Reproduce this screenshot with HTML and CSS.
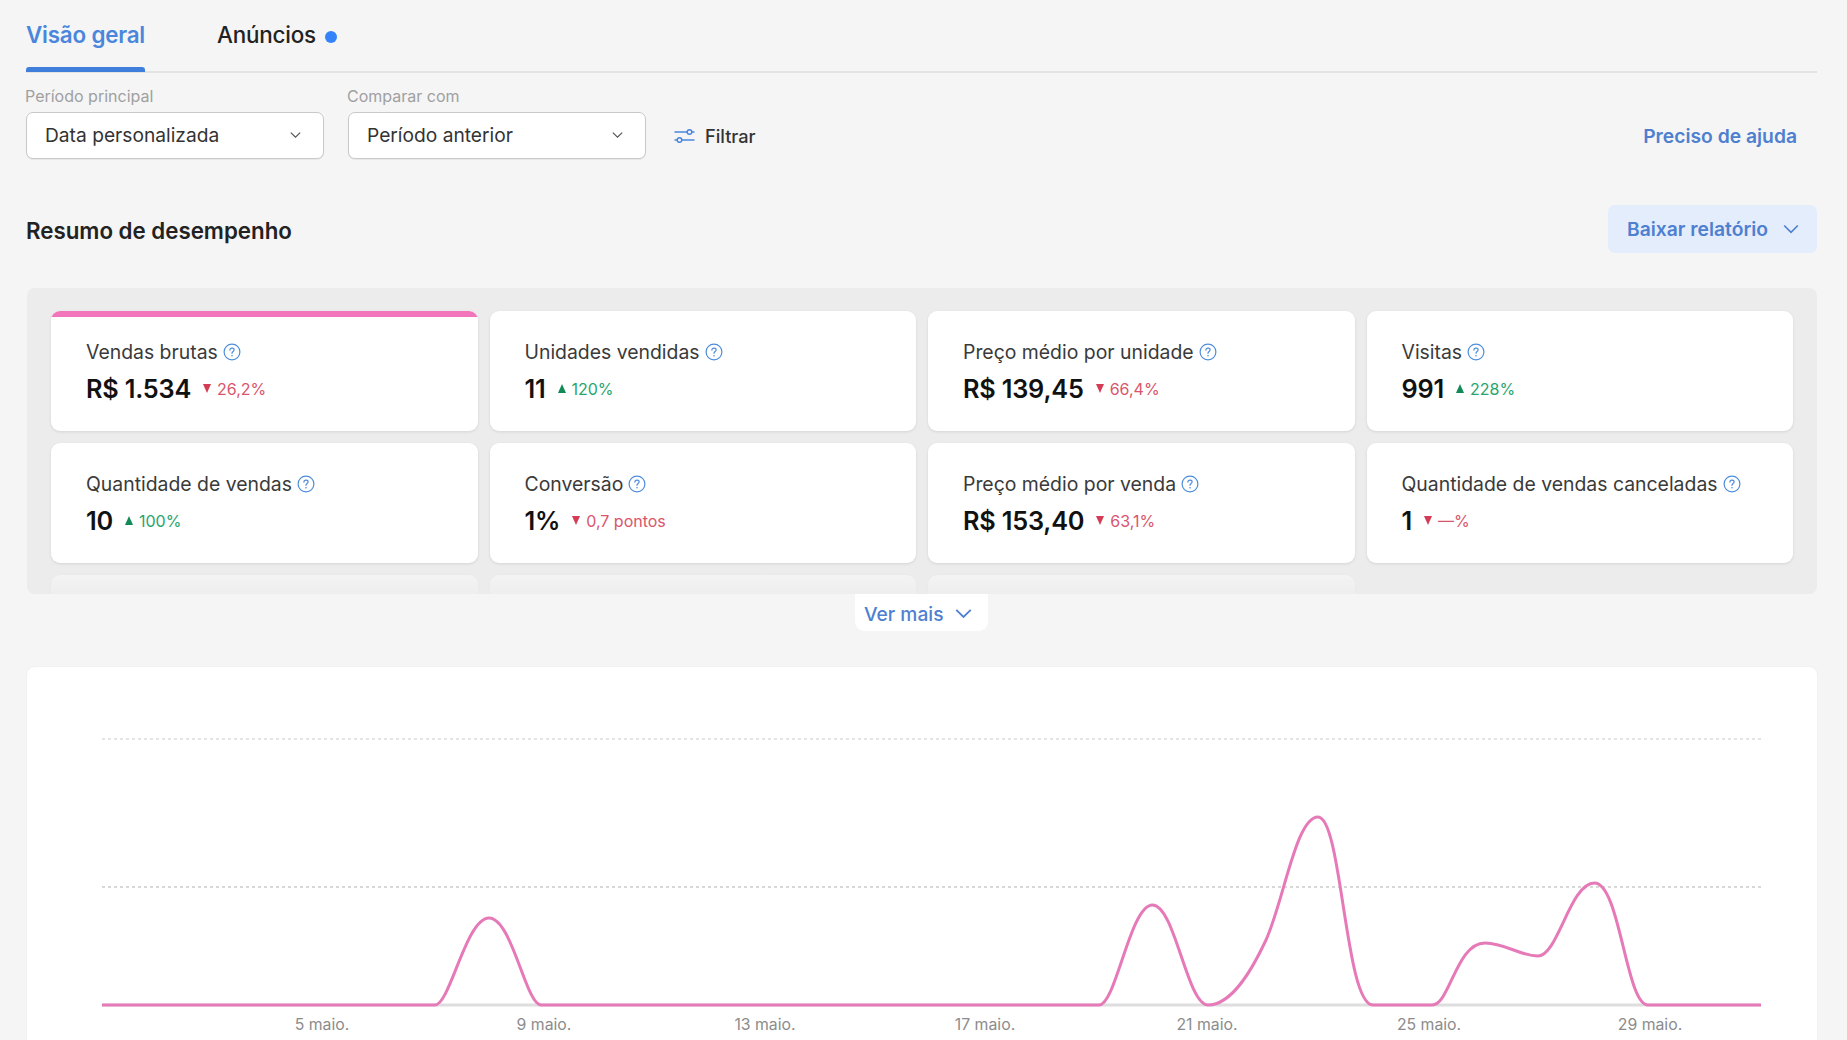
FILE: index.html
```html
<!DOCTYPE html>
<html lang="pt-BR">
<head>
<meta charset="utf-8">
<title>Visão geral</title>
<link rel="stylesheet" href="styles.css">
</head>
<body>
<svg class="defs" width="0" height="0" aria-hidden="true">
  <symbol id="help" viewBox="0 0 18 18">
    <circle cx="9" cy="9" r="7.9" fill="none" stroke="currentColor" stroke-width="1.2"/>
    <path d="M6.9 7.1c0-1.2 1-1.9 2.1-1.9s2.1.7 2.1 1.8c0 1.6-2.1 1.6-2.1 3.3" fill="none" stroke="currentColor" stroke-width="1.2" stroke-linecap="round"/>
    <circle cx="9" cy="12.8" r=".8" fill="currentColor"/>
  </symbol>
  <symbol id="chev" viewBox="0 0 16 10">
    <path d="M1.2 1.5 8 8.3l6.8-6.8" fill="none" stroke="currentColor" stroke-width="1.7"/>
  </symbol>
</svg>
<main class="page">
  <nav class="tabs">
    <a class="tab tab-active">Visão geral</a>
    <a class="tab">Anúncios <span class="dot"></span></a>
  </nav>

  <section class="filters">
    <div class="field">
      <span class="field-label">Período principal</span>
      <div class="select"><span>Data personalizada</span><svg class="select-chev"><use href="#chev"/></svg></div>
    </div>
    <div class="field">
      <span class="field-label">Comparar com</span>
      <div class="select"><span>Período anterior</span><svg class="select-chev"><use href="#chev"/></svg></div>
    </div>
    <button class="filter-btn">
      <svg class="filter-icon" viewBox="0 0 22 18">
        <path d="M1 5h13M18 5h3M1 13h3M8 13h13" fill="none" stroke="currentColor" stroke-width="1.5"/>
        <circle cx="16" cy="5" r="2.3" fill="none" stroke="currentColor" stroke-width="1.5"/>
        <circle cx="6" cy="13" r="2.3" fill="none" stroke="currentColor" stroke-width="1.5"/>
      </svg>
      Filtrar
    </button>
    <a class="help-link">Preciso de ajuda</a>
  </section>

  <header class="summary-head">
    <h2 class="summary-title">Resumo de desempenho</h2>
    <button class="download">Baixar relatório <svg class="download-chev"><use href="#chev"/></svg></button>
  </header>

  <section class="panel">
    <div class="grid">
      <article class="card card-selected">
        <div class="card-label">Vendas brutas <svg class="help"><use href="#help"/></svg></div>
        <div class="card-row"><span class="value">R$ 1.534</span><span class="delta down"><i class="tri"></i>26,2%</span></div>
      </article>
      <article class="card">
        <div class="card-label">Unidades vendidas <svg class="help"><use href="#help"/></svg></div>
        <div class="card-row"><span class="value">11</span><span class="delta up"><i class="tri"></i>120%</span></div>
      </article>
      <article class="card">
        <div class="card-label">Preço médio por unidade <svg class="help"><use href="#help"/></svg></div>
        <div class="card-row"><span class="value">R$ 139,45</span><span class="delta down"><i class="tri"></i>66,4%</span></div>
      </article>
      <article class="card">
        <div class="card-label">Visitas <svg class="help"><use href="#help"/></svg></div>
        <div class="card-row"><span class="value">991</span><span class="delta up"><i class="tri"></i>228%</span></div>
      </article>
      <article class="card">
        <div class="card-label">Quantidade de vendas <svg class="help"><use href="#help"/></svg></div>
        <div class="card-row"><span class="value">10</span><span class="delta up"><i class="tri"></i>100%</span></div>
      </article>
      <article class="card">
        <div class="card-label">Conversão <svg class="help"><use href="#help"/></svg></div>
        <div class="card-row"><span class="value">1%</span><span class="delta down"><i class="tri"></i>0,7 pontos</span></div>
      </article>
      <article class="card">
        <div class="card-label">Preço médio por venda <svg class="help"><use href="#help"/></svg></div>
        <div class="card-row"><span class="value">R$ 153,40</span><span class="delta down"><i class="tri"></i>63,1%</span></div>
      </article>
      <article class="card">
        <div class="card-label">Quantidade de vendas canceladas <svg class="help"><use href="#help"/></svg></div>
        <div class="card-row"><span class="value">1</span><span class="delta down"><i class="tri"></i>—%</span></div>
      </article>
      <article class="card"></article>
      <article class="card"></article>
      <article class="card"></article>
    </div>
  </section>
  <div class="more-wrap">
    <button class="more">Ver mais <svg class="more-chev"><use href="#chev"/></svg></button>
  </div>

  <section class="chart-card">
    <svg class="chart" viewBox="0 0 1790 373" width="1790" height="373">
      <g transform="translate(-27 -667)">
        <path class="grid-line" d="M102 739H1761"/>
        <path class="grid-line grid-line-mid" d="M102 887H1761"/>
        <path class="axis" d="M102 1005H1761"/>
        <path class="curve" d="M102 1005H435C450 1005 466 918 489 918C512 918 526 1005 541 1005H1099C1116 1005 1130 905 1152.5 905C1175 905 1187 1005 1208 1005C1232 1005 1252 970 1266 940C1284 900 1296 817 1318 817C1342 817 1345 1005 1373 1005H1432C1450 1005 1456 943 1485 943C1505 943 1520 956 1538 956C1558 956 1570 883 1594.5 883C1620 883 1626 1005 1648 1005H1761"/>
        <g class="ticks">
          <text x="322" y="1030">5 maio.</text>
          <text x="544" y="1030">9 maio.</text>
          <text x="765" y="1030">13 maio.</text>
          <text x="985" y="1030">17 maio.</text>
          <text x="1207" y="1030">21 maio.</text>
          <text x="1429" y="1030">25 maio.</text>
          <text x="1650" y="1030">29 maio.</text>
        </g>
      </g>
    </svg>
  </section>
</main>
</body>
</html>
```

FILE: styles.css
```css
* { box-sizing: border-box; }
html, body { margin: 0; height: 100%; }
body {
  background: #f5f5f5;
  color: #1f1f1f;
  font-family: "Inter", "Liberation Sans", sans-serif;
  overflow: hidden;
}
.defs { position: absolute; }
.page { width: 1847px; height: 1040px; padding: 0 30px 0 26px; overflow: hidden; }

.tabs {
  display: flex;
  gap: 72px;
  height: 73px;
  border-bottom: 2px solid #e3e3e3;
}
.tab {
  position: relative;
  width: max-content;
  padding-top: 21px;
  font-size: 22.4px;
  font-weight: 500;
  line-height: 28px;
  letter-spacing: -.2px;
  color: #222;
}
.tab-active { color: #4a86dc; font-weight: 600; }
.tab-active::after {
  content: "";
  position: absolute;
  left: 0; right: 0; bottom: -1px;
  height: 5px;
  background: #3f7fdb;
  border-radius: 3px 3px 0 0;
}
.dot {
  display: inline-block;
  width: 12px; height: 12px;
  margin-left: 3px;
  border-radius: 50%;
  background: #3483fa;
}

.filters { display: flex; align-items: flex-end; gap: 24px; margin-top: 13px; }
.field { display: flex; flex-direction: column; gap: 6px; }
.field-label { margin-left: -1px; font-size: 16px; line-height: 20px; color: #a0a0a0; }
.select {
  width: 298px; height: 47px;
  display: flex; align-items: center; justify-content: space-between;
  padding: 0 22px 2px 18px;
  background: #fff;
  border: 1px solid #c9c9c9;
  border-radius: 7px;
  box-shadow: 0 1px 1px rgba(0,0,0,.06);
  font-size: 19.2px;
  color: #333;
}
.select-chev { width: 11px; height: 8px; color: #555; }
.filter-btn {
  display: flex; align-items: center; gap: 9px;
  height: 47px; padding: 0; margin-left: 3px;
  background: none; border: 0;
  font: inherit; font-size: 18.2px; font-weight: 500; color: #333;
}
.filter-icon { width: 23px; height: 18px; color: #4a86dc; }
.help-link {
  margin-left: auto; margin-right: 20px;
  height: 47px; line-height: 48px;
  font-size: 19.3px; font-weight: 600; color: #4f80d0;
}

.summary-head { display: flex; align-items: center; justify-content: space-between; margin-top: 46px; height: 48px; }
.summary-title { margin: 2px 0 0; font-size: 22.3px; font-weight: 600; color: #222; }
.download {
  display: flex; align-items: center; gap: 15px;
  width: 209px; height: 48px;
  padding: 0 0 0 19px;
  background: #e3edfc; border: 0; border-radius: 7px;
  font: inherit; font-size: 19.3px; font-weight: 600; color: #4f80d0;
}
.download-chev { width: 16px; height: 10px; }

.panel {
  position: relative;
  height: 306px;
  margin: 35px 0 0 1px;
  padding: 23px 24px 0;
  background: #ececec;
  border-radius: 8px;
  overflow: hidden;
}
.panel::after {
  content: "";
  position: absolute;
  left: 0; right: 0; bottom: 0;
  height: 20px;
  background: linear-gradient(rgba(236,236,236,.6), rgba(236,236,236,.9));
}
.grid { display: grid; grid-template-columns: repeat(4, 1fr); gap: 12px; }
.card {
  position: relative;
  height: 120px;
  padding: 29.5px 20px 0 35px;
  background: #fff;
  border-radius: 9px;
  box-shadow: 0 1px 3px rgba(0,0,0,.1);
  overflow: hidden;
}
.card-selected::before {
  content: "";
  position: absolute;
  top: 0; left: 0; right: 0;
  height: 6px;
  background: #f274bb;
}
.card-label {
  display: flex; align-items: center; gap: 5px;
  height: 22px;
  font-size: 19.4px;
  color: #3a3a3a;
}
.help { width: 18px; height: 18px; color: #4f8ddb; }
.card-row { display: flex; align-items: center; gap: 12px; height: 30px; margin-top: 11px; }
.value { font-size: 25.3px; font-weight: 600; color: #111; letter-spacing: -.2px; }
.delta { display: flex; align-items: center; gap: 6px; font-size: 16px; }
.tri { width: 0; height: 0; border-left: 4.5px solid transparent; border-right: 4.5px solid transparent; }
.down { color: #d9556b; }
.down .tri { border-top: 9px solid #d63b55; }
.up { color: #27a56e; }
.up .tri { border-bottom: 9px solid #118a57; }

.more-wrap { display: flex; justify-content: center; height: 37px; }
.more {
  display: flex; align-items: center; gap: 12px;
  width: 133px; height: 37px;
  padding: 2px 0 0 9px;
  background: #fff; border: 0;
  border-radius: 0 0 9px 9px;
  font: inherit; font-size: 19.2px; font-weight: 500; color: #4f80d0;
}
.more-chev { width: 17px; height: 11px; }

.chart-card {
  margin: 36px 0 0 1px;
  width: 1790px; height: 373px;
  background: #fff;
  border-radius: 8px 8px 0 0;
  box-shadow: 0 0 2px rgba(0,0,0,.06);
}
.chart { display: block; }
.grid-line { fill: none; stroke: #e4e4e4; stroke-width: 2; stroke-dasharray: 3 3; }
.grid-line-mid { stroke: #d8d8d8; }
.axis { fill: none; stroke: #dedede; stroke-width: 3; }
.curve { fill: none; stroke: #e67ab8; stroke-width: 3; stroke-linejoin: round; }
.ticks text { font-size: 15.8px; fill: #8c8c8c; text-anchor: middle; }
```
